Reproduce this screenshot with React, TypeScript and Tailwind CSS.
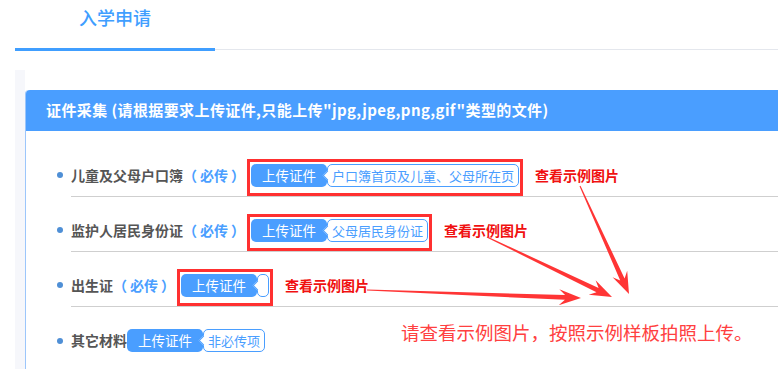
import React from "react";

type P = [number, number];

function arrowPoints(s: P, t: P, L = 22, H = 8, N = 6, w0 = 0.6, w1 = 2.4): string {
  const dx = t[0] - s[0];
  const dy = t[1] - s[1];
  const len = Math.hypot(dx, dy);
  const ux = dx / len;
  const uy = dy / len;
  const nx = -uy;
  const ny = ux;
  const pts: P[] = [
    [s[0] + nx * w0, s[1] + ny * w0],
    [t[0] - ux * (L - N) + nx * w1, t[1] - uy * (L - N) + ny * w1],
    [t[0] - ux * L + nx * H, t[1] - uy * L + ny * H],
    [t[0], t[1]],
    [t[0] - ux * L - nx * H, t[1] - uy * L - ny * H],
    [t[0] - ux * (L - N) - nx * w1, t[1] - uy * (L - N) - ny * w1],
    [s[0] - nx * w0, s[1] - ny * w0],
  ];
  return pts.map((p) => `${p[0].toFixed(1)},${p[1].toFixed(1)}`).join(" ");
}

function UploadButton() {
  return (
    <div className="h-[23px] w-[76px] rounded-[5px] bg-[#4a9eff] text-white text-[13.5px] leading-[23px] flex items-center justify-center">
      上传证件
    </div>
  );
}

function Hint({ text, stub }: { text?: string; stub?: boolean }) {
  return (
    <div
      className={
        "relative h-[23px] rounded-[5px] border border-[#4a9eff] bg-white text-[#4a9eff] text-[13px] leading-[21px] " +
        (stub ? "w-[12px]" : "px-[4px]")
      }
    >
      <span className="absolute left-[-4px] top-[7px] w-[7px] h-[7px] bg-white border-l border-b border-[#4a9eff] rotate-45"></span>
      <span className="relative">{text}</span>
    </div>
  );
}

function Group({ text, stub }: { text?: string; stub?: boolean }) {
  return (
    <div className="flex items-center">
      <UploadButton />
      <Hint text={text} stub={stub} />
    </div>
  );
}

function RedBox({ children }: { children: React.ReactNode }) {
  return (
    <div className="ml-[2px] mt-[4px] border-[3px] border-[#ff3030] pl-[1px] pr-[1px] pt-[2px] pb-[6px]">
      {children}
    </div>
  );
}

function Row({ children, last }: { children: React.ReactNode; last?: boolean }) {
  return (
    <div
      className={
        "h-[55px] pt-[12px] flex items-center " +
        (last ? "" : "border-b border-[#cfcfcf]")
      }
    >
      <span className="-ml-[14px] mr-[8px] w-[6px] h-[6px] rounded-full bg-[#4f8fd6] shrink-0"></span>
      {children}
    </div>
  );
}

function Label({ children }: { children: React.ReactNode }) {
  return <span className="text-[14px] font-bold text-[#555555] whitespace-nowrap">{children}</span>;
}

function Must() {
  return (
    <span className="inline-flex text-[14px] font-bold text-[#4a9eff] whitespace-nowrap">
      <span>（</span>
      <span className="mx-[3px]">必传</span>
      <span>）</span>
    </span>
  );
}

function Sample() {
  return (
    <span className="ml-[12px] text-[14px] font-bold text-[#f01010] whitespace-nowrap">查看示例图片</span>
  );
}

export default function App() {
  const arrows: [P, P][] = [
    [[580, 186], [629, 294]],
    [[487, 237], [612, 297]],
    [[367, 290], [581, 298]],
  ];
  return (
    <div
      className="relative w-[778px] h-[369px] overflow-hidden bg-white"
      style={{ fontFamily: '"Noto Sans CJK SC", "Microsoft YaHei", sans-serif' }}
    >
      {/* tabs */}
      <div className="ml-[15px] h-[51px] flex items-end">
        <div className="w-[200px] h-full flex flex-col">
          <div className="pt-[5px] text-center text-[18px] leading-[24px] font-medium text-[#409eff]">入学申请</div>
          <div className="flex-1"></div>
          <div className="h-[3px] bg-[#409eff]"></div>
        </div>
        <div className="flex-1 h-px mb-[1px] bg-[#e4e7ed]"></div>
      </div>

      {/* content */}
      <div className="mt-[19px] ml-[15px] border-l-[10px] border-[#f6f7fb] pt-[20px] h-[299px]">
        <div className="h-full border-l border-[#9cc6fb] rounded-tl-[4px] bg-white">
          <div className="h-[41px] bg-[#4a9eff] rounded-tl-[4px] pl-[20px] flex items-center text-white text-[15px] tracking-[0.4px] font-bold whitespace-nowrap">
            证件采集 (请根据要求上传证件,只能上传"jpg,jpeg,png,gif"类型的文件)
          </div>
          <div className="ml-[45px] pt-[11px]">
            <Row>
              <Label>儿童及父母户口簿</Label>
              <Must />
              <RedBox>
                <Group text="户口簿首页及儿童、父母所在页" />
              </RedBox>
              <Sample />
            </Row>
            <Row>
              <Label>监护人居民身份证</Label>
              <Must />
              <RedBox>
                <Group text="父母居民身份证" />
              </RedBox>
              <Sample />
            </Row>
            <Row>
              <Label>出生证</Label>
              <Must />
              <RedBox>
                <Group stub />
              </RedBox>
              <Sample />
            </Row>
            <Row last>
              <Label>其它材料</Label>
              <Group text="非必传项" />
            </Row>
          </div>
        </div>
      </div>

      {/* annotations */}
      <svg className="absolute left-0 top-0 pointer-events-none" width="778" height="369" viewBox="0 0 778 369">
        {arrows.map(([s, t], i) => (
          <polygon key={i} points={arrowPoints(s, t)} fill="#ff3535" />
        ))}
      </svg>
      <div className="absolute left-[401px] top-[319px] text-[18.5px] leading-[26px] text-[#ff4040] whitespace-nowrap">
        请查看示例图片，按照示例样板拍照上传。
      </div>
    </div>
  );
}
